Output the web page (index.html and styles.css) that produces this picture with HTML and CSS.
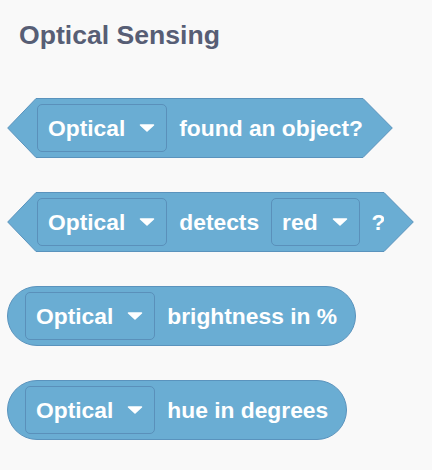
FILE: index.html
```html
<!DOCTYPE html>
<html>
<head>
<meta charset="utf-8">
<link rel="stylesheet" href="styles.css">
</head>
<body>
<div class="page">
  <h1 class="title">Optical Sensing</h1>
  <div class="blocks">
    <div class="block bool">
      <svg class="cap" width="29" height="60" viewBox="0 0 29 60"><polygon points="0.7,30 29,0.5 29,59.5" class="capfill"/><polyline points="29,0.5 0.7,30 29,59.5" class="capline"/></svg>
      <div class="body">
        <div class="dd"><span>Optical</span><svg class="arrow" width="16" height="8" viewBox="0 0 16 8"><polygon points="1.5,1 14.5,1 8,7" /></svg></div>
        <span class="txt">found an object?</span>
      </div>
      <svg class="cap" width="30" height="60" viewBox="0 0 30 60"><polygon points="0,0.5 29.3,30 0,59.5" class="capfill"/><polyline points="0,0.5 29.3,30 0,59.5" class="capline"/></svg>
    </div>

    <div class="block bool">
      <svg class="cap" width="29" height="60" viewBox="0 0 29 60"><polygon points="0.7,30 29,0.5 29,59.5" class="capfill"/><polyline points="29,0.5 0.7,30 29,59.5" class="capline"/></svg>
      <div class="body">
        <div class="dd"><span>Optical</span><svg class="arrow" width="16" height="8" viewBox="0 0 16 8"><polygon points="1.5,1 14.5,1 8,7" /></svg></div>
        <span class="txt">detects</span>
        <div class="dd"><span>red</span><svg class="arrow" width="16" height="8" viewBox="0 0 16 8"><polygon points="1.5,1 14.5,1 8,7" /></svg></div>
        <span class="txt q">?</span>
      </div>
      <svg class="cap" width="30" height="60" viewBox="0 0 30 60"><polygon points="0,0.5 29.3,30 0,59.5" class="capfill"/><polyline points="0,0.5 29.3,30 0,59.5" class="capline"/></svg>
    </div>

    <div class="block rep">
      <div class="dd"><span>Optical</span><svg class="arrow" width="16" height="8" viewBox="0 0 16 8"><polygon points="1.5,1 14.5,1 8,7" /></svg></div>
      <span class="txt">brightness in %</span>
    </div>

    <div class="block rep">
      <div class="dd"><span>Optical</span><svg class="arrow" width="16" height="8" viewBox="0 0 16 8"><polygon points="1.5,1 14.5,1 8,7" /></svg></div>
      <span class="txt">hue in degrees</span>
    </div>
  </div>
</div>
</body>
</html>
```

FILE: styles.css
```css
html, body {
  margin: 0;
  padding: 0;
  background: #f9f9f9;
}
.page {
  padding: 20px 0 0 7px;
  font-family: "Liberation Sans", Arial, sans-serif;
}
.title {
  margin: 0 0 48px 12px;
  font-size: 26.6px;
  line-height: 30px;
  font-weight: bold;
  color: #575e75;
}
.blocks {
  display: flex;
  flex-direction: column;
  align-items: flex-start;
  gap: 34px;
}
.block {
  display: flex;
  align-items: center;
  height: 60px;
  box-sizing: border-box;
  color: #fff;
  font-size: 22.8px;
  font-weight: bold;
}
.cap {
  display: block;
  flex: none;
}
.capfill {
  fill: #6aadd3;
}
.capline {
  fill: none;
  stroke: #5a93bd;
  stroke-width: 1;
}
.body {
  display: flex;
  align-items: center;
  gap: 12px;
  height: 60px;
  box-sizing: border-box;
  padding-left: 1px;
  background: #6aadd3;
  border-top: 1px solid #5a93bd;
  border-bottom: 1px solid #5a93bd;
}
.body .q {
  margin-left: 0;
  margin-right: -2px;
}
.rep {
  background: #6aadd3;
  border: 1px solid #5a93bd;
  border-radius: 30px;
  padding: 0 18px 0 17px;
  gap: 12px;
}
.dd {
  display: flex;
  align-items: center;
  gap: 14px;
  height: 48px;
  box-sizing: border-box;
  padding: 0 11px 0 10px;
  border: 1px solid #5a90ba;
  border-radius: 5px;
  background: #6aadd3;
}
.arrow {
  display: block;
  margin-top: -1px;
}
.arrow polygon {
  fill: #fff;
  stroke: #fff;
  stroke-width: 1.5;
  stroke-linejoin: round;
}
.txt {
  white-space: nowrap;
}
```
